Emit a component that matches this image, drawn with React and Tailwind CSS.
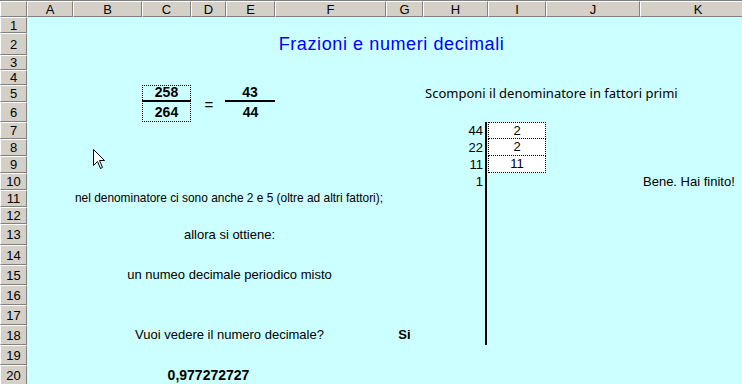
import React from 'react';

const colHeaders = [
	['A', 'col-start-2'],
	['B', 'col-start-3'],
	['C', 'col-start-4'],
	['D', 'col-start-5'],
	['E', 'col-start-6'],
	['F', 'col-start-7'],
	['G', 'col-start-8'],
	['H', 'col-start-9'],
	['I', 'col-start-10'],
	['J', 'col-start-11'],
	['K', 'col-start-12'],
];

const rowHeaders = [
	['1', 'row-start-2'],
	['2', 'row-start-3'],
	['3', 'row-start-4'],
	['4', 'row-start-5'],
	['5', 'row-start-6'],
	['6', 'row-start-7'],
	['7', 'row-start-8'],
	['8', 'row-start-9'],
	['9', 'row-start-10'],
	['10', 'row-start-11'],
	['11', 'row-start-12'],
	['12', 'row-start-13'],
	['13', 'row-start-14'],
	['14', 'row-start-15'],
	['15', 'row-start-16'],
	['16', 'row-start-17'],
	['17', 'row-start-18'],
	['18', 'row-start-19'],
	['19', 'row-start-20'],
	['20', 'row-start-21'],
	['', 'row-start-22'],
];

const head =
	'flex items-center justify-center bg-[#d4d0c8] border-t border-l border-t-white border-l-white border-r border-b border-r-[#808080] border-b-[#808080] text-[13px] text-black leading-none';

const Cursor = () => (
	<svg className="absolute left-[93px] top-[148px]" width="13" height="21" viewBox="0 0 13 21">
		<path
			d="M0.5 0.5 L0.5 16.5 L4.5 12.5 L7.5 19.5 L9.5 18.5 L6.5 11.5 L11.5 11.5 Z"
			fill="#fff"
			stroke="#000"
			strokeWidth="1"
		/>
	</svg>
);

const App = () => {
	return (
		<div className="relative w-[742px] h-[384px] overflow-hidden bg-[#ccffff] border-t border-[#808080] font-['Liberation_Sans',Arial,sans-serif] text-black">
			<div className="grid grid-cols-[27px_46px_69px_49px_35px_49px_111px_37px_65px_58px_94px_116px] grid-rows-[16px_16px_22px_15px_15px_17px_20px_17px_17px_17px_17px_17px_17px_21px_20px_20px_20px_20px_20px_20px_20px_40px] w-[756px]">
				{/* Headers */}
				<div className={`${head} col-start-1 row-start-1`}></div>
				{colHeaders.map(([label, cls]) => (
					<div key={label} className={`${head} ${cls} row-start-1`}>
						{label}
					</div>
				))}
				{rowHeaders.map(([label, cls]) => (
					<div key={cls} className={`${head} ${cls} col-start-1`}>
						{label}
					</div>
				))}

				{/* Title */}
				<div className="col-start-2 col-span-11 row-start-3 flex items-center justify-center text-[18px] tracking-[0.6px] text-[#0000ff]">
					Frazioni e numeri decimali
				</div>

				{/* Fraction box */}
				<div className="col-start-4 row-start-6 row-span-2 border border-dotted border-black"></div>
				<div className="col-start-4 row-start-6 flex items-center justify-center font-bold text-[14px] border-b-2 border-black">
					258
				</div>
				<div className="col-start-4 row-start-7 flex items-center justify-center font-bold text-[14px]">
					264
				</div>
				<div className="col-start-5 row-start-6 row-span-2 flex items-center justify-center text-[15px] pt-[3px] pl-[1px]">
					=
				</div>
				<div className="col-start-6 row-start-6 flex items-center justify-center font-bold text-[14px] border-b-2 border-black -ml-px">
					43
				</div>
				<div className="col-start-6 row-start-7 flex items-center justify-center font-bold text-[14px]">
					44
				</div>

				{/* Factorisation */}
				<div className="col-start-9 col-span-4 row-start-6 flex items-center pl-[2px] whitespace-nowrap text-[13px] font-['Noto_Sans',sans-serif]">
					Scomponi il denominatore in fattori primi
				</div>
				<div className="col-start-9 row-start-8 row-span-12 border-r-2 border-black mr-px"></div>
				<div className="col-start-9 row-start-8 flex items-center justify-end pr-[5px] text-[13px]">44</div>
				<div className="col-start-9 row-start-9 flex items-center justify-end pr-[5px] text-[13px]">22</div>
				<div className="col-start-9 row-start-10 flex items-center justify-end pr-[5px] text-[13px]">11</div>
				<div className="col-start-9 row-start-11 flex items-center justify-end pr-[5px] text-[13px]">1</div>
				<div className="col-start-10 row-start-8 flex items-center justify-center bg-white border border-dotted border-black text-[13px] text-black">2</div>
				<div className="col-start-10 row-start-9 flex items-center justify-center bg-white border border-dotted border-black border-t-0 text-[13px] text-black">2</div>
				<div className="col-start-10 row-start-10 flex items-center justify-center bg-white border border-dotted border-black border-t-0 text-[13px] text-black">11</div>
				<div className="col-start-12 row-start-11 flex items-center pl-[3px] whitespace-nowrap text-[13px]">
					Bene. Hai finito!
				</div>

				{/* Messages */}
				<div className="col-start-3 col-span-5 row-start-12 flex items-center justify-end pr-[3px] overflow-hidden whitespace-nowrap text-[11.9px]">
					<span className="shrink-0">nel denominatore ci sono anche 2 e 5 (oltre ad altri fattori);</span>
				</div>
				<div className="col-start-3 col-span-5 row-start-14 flex items-center justify-center whitespace-nowrap text-[13px]">
					allora si ottiene:
				</div>
				<div className="col-start-3 col-span-5 row-start-16 flex items-center justify-center whitespace-nowrap text-[13px]">
					un numeo decimale periodico misto
				</div>
				<div className="col-start-3 col-span-5 row-start-19 flex items-center justify-center whitespace-nowrap text-[13px]">
					Vuoi vedere il numero decimale?
				</div>
				<div className="col-start-8 row-start-19 flex items-center justify-center font-bold text-[13px]">
					Si
				</div>
				<div className="col-start-4 col-span-3 row-start-21 flex items-center justify-center font-bold text-[14px]">
					0,977272727
				</div>
			</div>
			<Cursor />
		</div>
	);
};

export default App;
